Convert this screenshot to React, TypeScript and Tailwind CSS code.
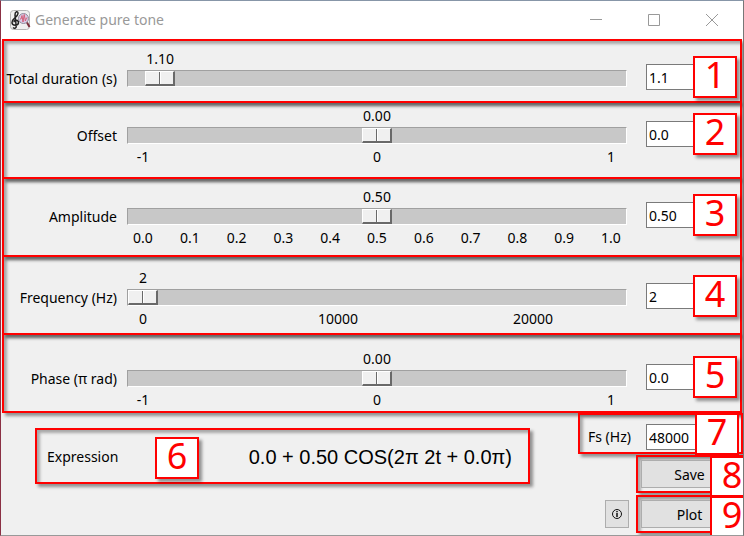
import { useState } from "react";
import type { ReactNode } from "react";

const THUMB = 30;

const alongTrack = (fraction: number) => ({
  marginLeft: `calc((100% - ${THUMB + 2}px) * ${fraction} + 1px)`,
});

const outline = "border-2 border-[#ff0000] shadow-[3px_3px_3px_rgba(0,0,0,0.4),inset_3px_3px_3px_rgba(0,0,0,0.3)]";

const sliderStyle =
  "block h-[17px] w-full appearance-none border border-t-[#a0a0a0] border-l-[#a0a0a0] border-r-white border-b-white bg-[#c8c8c8] [&::-webkit-slider-thumb]:h-[15px] [&::-webkit-slider-thumb]:w-[30px] [&::-webkit-slider-thumb]:appearance-none [&::-webkit-slider-thumb]:border-t [&::-webkit-slider-thumb]:border-l [&::-webkit-slider-thumb]:border-r-2 [&::-webkit-slider-thumb]:border-b-2 [&::-webkit-slider-thumb]:border-t-white [&::-webkit-slider-thumb]:border-l-white [&::-webkit-slider-thumb]:border-r-[#696969] [&::-webkit-slider-thumb]:border-b-[#696969] [&::-webkit-slider-thumb]:bg-[linear-gradient(90deg,#f0f0f0_13px,#696969_13px,#696969_14px,#ffffff_14px,#ffffff_15px,#f0f0f0_15px)]";

function Badge({ children, className }: { children: ReactNode; className: string }) {
  return (
    <span
      className={`absolute flex h-[42px] w-11 items-center justify-center border-2 border-[#ff0000] bg-white pb-1 text-4xl leading-8 text-[#ff0000] ${className}`}
    >
      {children}
    </span>
  );
}

type Tick = { at: number; text: string };

type Parameter = {
  id: string;
  label: string;
  min: number;
  max: number;
  step: number;
  start: number;
  digits: number;
  entry: string;
  ticks: Tick[];
  badge: string;
  pad: string;
};

const unitTicks: Tick[] = [
  { at: -1, text: "-1" },
  { at: 0, text: "0" },
  { at: 1, text: "1" },
];

const parameters: Parameter[] = [
  { id: "duration", label: "Total duration (s)", min: 0, max: 30, step: 0.01, start: 1.1, digits: 2, entry: "1.1", ticks: [], badge: "1", pad: "pt-2 pb-[11px]" },
  { id: "offset", label: "Offset", min: -1, max: 1, step: 0.01, start: 0, digits: 2, entry: "0.0", ticks: unitTicks, badge: "2", pad: "pt-[3px] pb-[10px]" },
  {
    id: "amplitude", label: "Amplitude", min: 0, max: 1, step: 0.01, start: 0.5, digits: 2, entry: "0.50",
    ticks: Array.from({ length: 11 }, (_, i) => ({ at: i / 10, text: (i / 10).toFixed(1) })),
    badge: "3", pad: "pt-2 pb-[7px]",
  },
  {
    id: "frequency", label: "Frequency (Hz)", min: 0, max: 24000, step: 1, start: 2, digits: 0, entry: "2",
    ticks: [{ at: 0, text: "0" }, { at: 10000, text: "10000" }, { at: 20000, text: "20000" }],
    badge: "4", pad: "pt-[11px] pb-1",
  },
  { id: "phase", label: "Phase (π rad)", min: -1, max: 1, step: 0.01, start: 0, digits: 2, entry: "0.0", ticks: unitTicks, badge: "5", pad: "pt-[14px] pb-px" },
];

function ParameterRow({ p }: { p: Parameter }) {
  const [value, setValue] = useState(p.start);
  const fractionOf = (v: number) => (v - p.min) / (p.max - p.min);
  return (
    <section className={`-mt-0.5 grid grid-cols-[113px_1fr_94px] ${outline} ${p.pad}`}>
      <label htmlFor={p.id} className="mt-5 text-right leading-[19px] whitespace-nowrap">
        {p.label}
      </label>
      <div className="mr-[19px] ml-[10px]">
        <div className="flex h-[21px]">
          <output htmlFor={p.id} className="flex w-[30px] shrink-0 justify-center leading-5" style={alongTrack(fractionOf(value))}>
            {value.toFixed(p.digits)}
          </output>
        </div>
        <input id={p.id} type="range" min={p.min} max={p.max} step={p.step} value={value} onChange={(e) => setValue(Number(e.target.value))} className={sliderStyle} />
        {p.ticks.length > 0 && (
          <div className="grid pt-[3px]">
            {p.ticks.map((t) => (
              <span key={t.text} className="col-start-1 row-start-1 flex w-[30px] justify-center leading-5" style={alongTrack(fractionOf(t.at))}>
                {t.text}
              </span>
            ))}
          </div>
        )}
      </div>
      <div className="relative">
        <input type="text" aria-label={`${p.label} value`} defaultValue={p.entry} className="mt-[15px] block h-[26px] w-16 border border-[#7a7a7a] bg-white px-0.5" />
        <Badge className="top-[7px] right-[3px] shadow-[3px_3px_3px_rgba(0,0,0,0.4)]">{p.badge}</Badge>
      </div>
    </section>
  );
}

function AppIcon() {
  return (
    <svg width="21" height="20" viewBox="0 0 21 20" fill="none" aria-hidden="true">
      <rect x="0.5" y="0.5" width="19" height="19" rx="3" fill="#f0f0f0" stroke="#b4b4b4" />
      <path d="M3 17.500c1.500 1.500 3.500.8 3.200-1.500L5 5c-.2-3.500 3.200-4.500 3-1.500C7.800 7 2 8.500 2 12.500c0 3.500 6.500 3.500 6.500 0 0-3-4.500-3-4.500-.3" stroke="#222" strokeWidth="1.500" />
      <circle cx="13.500" cy="8.500" r="5" fill="#d9cbe6" stroke="#8f8a9a" />
      <path d="M10 9h1l1-3.500 1 6.500 1.200-7.500 1.200 6.500 1-3h1" stroke="#d4607a" />
      <path d="m17 12.500 2.500 4.500" stroke="#7a2f3d" strokeWidth="2" />
    </svg>
  );
}

export default function App() {
  return (
    <main className="overflow-hidden border border-t-[#8796a8] border-r-[#777] border-b-[#999] border-l-[#8b3044] bg-[#f0f0f0] font-['Noto_Sans','Open_Sans',sans-serif] text-sm text-black">
      <header className="flex h-10 items-center bg-white pr-0.5 pb-0.5 pl-[9px] text-[#999]">
        <AppIcon />
        <h1 className="ml-1 flex-1 text-sm">Generate pure tone</h1>
        <button aria-label="Minimize" className="flex w-[58px] justify-center">
          <svg width="12" height="12" stroke="currentColor"><path d="M0 5.500h12" /></svg>
        </button>
        <button aria-label="Maximize" className="flex w-[58px] justify-center">
          <svg width="12" height="12" fill="none" stroke="currentColor"><path d="M.5.5h11v11H.5z" /></svg>
        </button>
        <button aria-label="Close" className="flex w-[58px] justify-center">
          <svg width="12" height="12" stroke="currentColor"><path d="m0 0 12 12M12 0 0 12" /></svg>
        </button>
      </header>
      <div className="mx-px">
        {parameters.map((p) => (
          <ParameterRow key={p.id} p={p} />
        ))}
      </div>
      <div className="flex justify-between pb-0.5">
        <section className={`relative mt-[15px] ml-[34px] flex h-14 w-[495px] items-center justify-between pt-0.5 pr-4 pl-[10px] ${outline}`}>
          <span>Expression</span>
          <Badge className="top-[7px] left-[118px] shadow-[3px_3px_3px_rgba(0,0,0,0.4)]">6</Badge>
          <output className="font-['Liberation_Sans',Arial,sans-serif] text-xl">0.0 + 0.50 COS(2π 2t + 0.0π)</output>
        </section>
        <div className="flex w-[165px] flex-col">
          <div className={`relative h-[41px] ${outline}`}>
            <div className="flex items-center pt-[9px] pl-2">
              <label htmlFor="fs" className="w-[58px]">Fs (Hz)</label>
              <input id="fs" type="text" defaultValue="48000" className="h-[26px] w-16 border border-[#7a7a7a] bg-white px-0.5" />
            </div>
            <Badge className="-top-0.5 right-0.5">7</Badge>
          </div>
          <div className={`relative mt-px ml-[58px] h-[38px] p-[3px] ${outline}`}>
            <button className="h-full w-full border border-[#adadad] bg-[#e1e1e1] pt-0.5">Save</button>
            <Badge className="-top-px left-[72px]">8</Badge>
          </div>
          <div className="mt-0.5 flex items-center justify-between">
            <button aria-label="Information" className="ml-[27px] flex h-7 w-6 items-center justify-center border border-[#adadad] bg-[#e1e1e1]">
              <svg width="12" height="12" viewBox="0 0 12 12" fill="none" stroke="#111"><circle cx="6" cy="6" r="4.500" /><path d="M6 5v4M6 3v1.200" strokeWidth="1.500" /></svg>
            </button>
            <div className={`relative h-[38px] w-[107px] p-[3px] ${outline}`}>
              <button className="h-full w-full border border-[#adadad] bg-[#e1e1e1] pt-0.5">Plot</button>
              <Badge className="-top-px left-[72px]">9</Badge>
            </div>
          </div>
        </div>
      </div>
    </main>
  );
}
